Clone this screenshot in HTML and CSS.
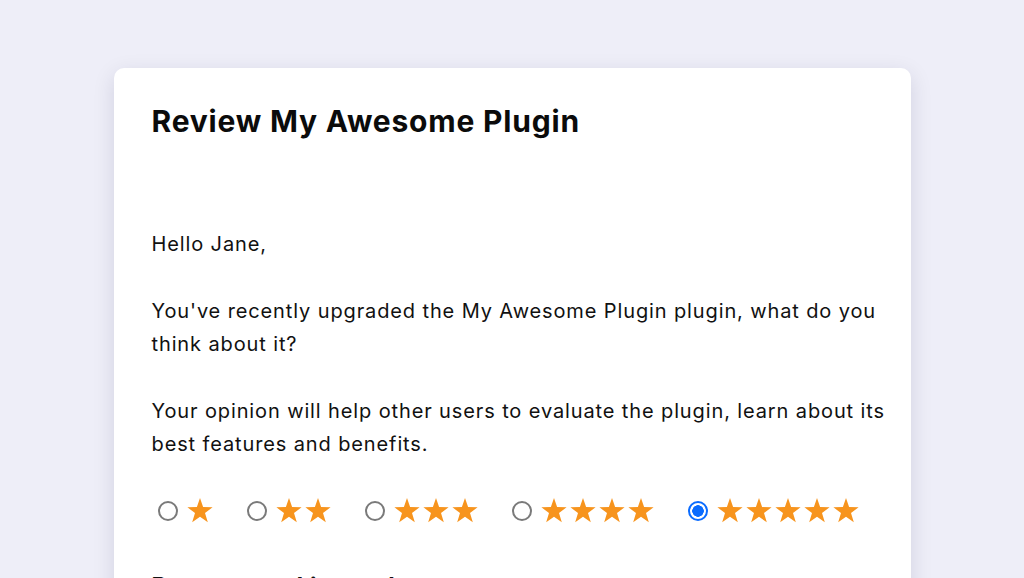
FILE: index.html
```html
<!DOCTYPE html>
<html lang="en">
<head>
<meta charset="utf-8">
<title>Review My Awesome Plugin</title>
<link rel="stylesheet" href="styles.css">
</head>
<body>
<svg width="0" height="0" class="defs" aria-hidden="true">
  <defs>
    <polygon id="star" points="13,0 16.1,9.1 25.6,9.3 18,15 20.8,24.3 13,18.8 5.2,24.3 8,15 0.4,9.3 9.9,9.1"/>
  </defs>
</svg>
<main class="card">
  <h1 class="title">Review My Awesome Plugin</h1>
  <p class="greeting">Hello Jane,</p>
  <p class="text">You've recently upgraded the My Awesome Plugin plugin, what do you think about it?</p>
  <p class="text">Your opinion will help other users to evaluate the plugin, learn about its best features and benefits.</p>
  <form class="rating">
    <label class="option"><input type="radio" name="rating" value="1"><span class="stars"><svg viewBox="0 0 26 25"><use href="#star"/></svg></span></label>
    <label class="option"><input type="radio" name="rating" value="2"><span class="stars"><svg viewBox="0 0 26 25"><use href="#star"/></svg><svg viewBox="0 0 26 25"><use href="#star"/></svg></span></label>
    <label class="option"><input type="radio" name="rating" value="3"><span class="stars"><svg viewBox="0 0 26 25"><use href="#star"/></svg><svg viewBox="0 0 26 25"><use href="#star"/></svg><svg viewBox="0 0 26 25"><use href="#star"/></svg></span></label>
    <label class="option"><input type="radio" name="rating" value="4"><span class="stars"><svg viewBox="0 0 26 25"><use href="#star"/></svg><svg viewBox="0 0 26 25"><use href="#star"/></svg><svg viewBox="0 0 26 25"><use href="#star"/></svg><svg viewBox="0 0 26 25"><use href="#star"/></svg></span></label>
    <label class="option"><input type="radio" name="rating" value="5" checked><span class="stars"><svg viewBox="0 0 26 25"><use href="#star"/></svg><svg viewBox="0 0 26 25"><use href="#star"/></svg><svg viewBox="0 0 26 25"><use href="#star"/></svg><svg viewBox="0 0 26 25"><use href="#star"/></svg><svg viewBox="0 0 26 25"><use href="#star"/></svg></span></label>
  </form>
  <h2 class="subtitle">Recommend it to others</h2>
</main>
</body>
</html>
```

FILE: styles.css
```css
html, body {
  margin: 0;
  padding: 0;
}
body {
  background: #eeeef8;
  font-family: Inter, "Noto Sans", "Liberation Sans", sans-serif;
  color: #111;
  overflow: hidden;
}
.defs {
  position: absolute;
  width: 0;
  height: 0;
}
.card {
  width: 797px;
  box-sizing: border-box;
  margin: 68px auto 0;
  padding: 35px 12px 40px 38px;
  background: #fff;
  border-radius: 10px;
  box-shadow: 0 6px 22px rgba(20, 20, 60, 0.12);
}
.title {
  margin: 0;
  font-size: 30px;
  line-height: 36px;
  font-weight: 700;
  letter-spacing: 0.8px;
  color: #0b0b0b;
}
.greeting {
  margin: 89px 0 0;
}
.greeting, .text {
  font-size: 20px;
  line-height: 33px;
  letter-spacing: 0.88px;
}
.text {
  margin: 34px 0 0;
}
.rating {
  display: flex;
  align-items: center;
  gap: 34px;
  height: 33px;
  margin-top: 33px;
  padding-left: 6px;
}
.option {
  display: flex;
  align-items: center;
  gap: 9px;
}
.option input {
  appearance: none;
  -webkit-appearance: none;
  margin: 0;
  width: 20px;
  height: 20px;
  border: 2px solid #7a7a7a;
  border-radius: 50%;
  box-sizing: border-box;
  background: #fff;
}
.option input:checked {
  border-color: #0a6cff;
  background: radial-gradient(circle, #0a6cff 0 5.5px, #fff 6px);
}
.stars {
  display: flex;
  gap: 3px;
}
.stars svg {
  width: 26px;
  height: 25px;
  fill: #f7941d;
  display: block;
}
.subtitle {
  margin: 45px 0 0;
  font-size: 24px;
  line-height: 30px;
  font-weight: 700;
  letter-spacing: 0.6px;
}
```
